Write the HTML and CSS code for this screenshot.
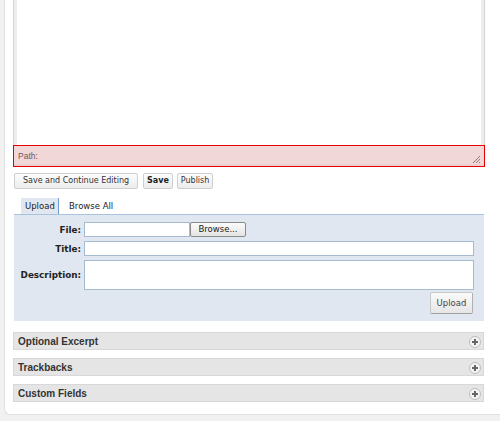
FILE: index.html
```html
<!DOCTYPE html>
<html>
<head>
<meta charset="utf-8">
<link rel="stylesheet" href="styles.css">
</head>
<body>
<div class="wrap">
  <div class="editor"></div>
  <div class="pathbar">
    <span class="path-label">Path:</span>
    <svg class="grip" width="10" height="10" viewBox="0 0 10 10"><path d="M9 2 L2 9 M9 5 L5 9 M9 8 L8 9" stroke="#8a7a7c" stroke-width="1" fill="none"/></svg>
  </div>
  <div class="actions">
    <button class="btn btn-wide">Save and Continue Editing</button>
    <button class="btn btn-bold">Save</button>
    <button class="btn">Publish</button>
  </div>
  <div class="tabs">
    <div class="tab tab-active">Upload</div>
    <div class="tab">Browse All</div>
  </div>
  <div class="panel">
    <div class="form">
      <label class="lbl">File:</label>
      <div class="file-row"><span class="input file-input"></span><span class="browse">Browse...</span></div>
      <label class="lbl">Title:</label>
      <span class="input"></span>
      <label class="lbl">Description:</label>
      <span class="input desc"></span>
    </div>
    <div class="upload-row"><button class="upload">Upload</button></div>
  </div>
  <div class="boxes">
    <div class="box"><span>Optional Excerpt</span><span class="plus"></span></div>
    <div class="box"><span>Trackbacks</span><span class="plus"></span></div>
    <div class="box"><span>Custom Fields</span><span class="plus"></span></div>
  </div>
</div>
</body>
</html>
```
FILE: styles.css
```css
html, body {
  margin: 0;
  padding: 0;
  background: #f1f1f1;
  overflow: hidden;
  height: 421px;
}
.wrap {
  margin-top: -10px;
  margin-left: 4px;
  background: #fff;
  border: 1px solid #e0e0e0;
  border-right: none;
  border-radius: 0 0 0 6px;
  padding: 0 0 12px 8px;
}
.editor {
  width: 472px;
  height: 154px;
  box-sizing: border-box;
  border-left: 1px solid #d4d4d4;
  border-right: 1px solid #d4d4d4;
  box-shadow: inset 3px 0 0 #ededed, inset -3px 0 0 #ededed;
  background: #fff;
}
.pathbar {
  width: 472px;
  height: 22px;
  box-sizing: border-box;
  border: 1px solid #e60000;
  background: #f2d7d9;
  box-shadow: inset 0 -2px 0 #ebcfd2;
  display: flex;
  align-items: center;
  justify-content: space-between;
  padding: 0 3px 0 4px;
}
.path-label {
  font-family: "Liberation Sans", Arial, sans-serif;
  font-size: 8.5px;
  color: #6a5a5c;
  margin-top: -1px;
}
.grip { margin-top: 6px; }
.actions {
  display: flex;
  gap: 4px;
  margin-top: 6px;
  margin-left: 1px;
}
.btn {
  font-family: "DejaVu Sans", Verdana, sans-serif;
  font-size: 8px;
  color: #333;
  height: 16px;
  padding: 0 3px;
  border: 1px solid #cfcfcf;
  border-radius: 2px;
  background: linear-gradient(#fdfdfd, #ececec);
  line-height: 14px;
  margin: 0;
}
.btn-wide { width: 124px; margin-right: 1px; }
.btn-bold { font-weight: bold; color: #222; }
.tabs {
  display: flex;
  margin-top: 9px;
  margin-left: 1px;
  width: 470px;
  border-bottom: 1px solid #a9c3de;
  height: 16px;
}
.tab {
  font-family: "DejaVu Sans", Verdana, sans-serif;
  font-size: 8.5px;
  color: #222;
  line-height: 17px;
  padding: 0 4px;
}
.tab-active {
  margin-left: 7px;
  width: 38px;
  box-sizing: border-box;
  background: #e0e7f0;
  border-right: 1px solid #6e9bd0;
}
.tab + .tab { margin-left: 6px; }
.panel {
  margin-left: 1px;
  width: 470px;
  height: 106px;
  box-sizing: border-box;
  background: #e0e7f0;
  padding: 7px 10px 0 0;
}
.form {
  display: grid;
  grid-template-columns: 67px 1fr;
  grid-template-rows: 15px 15px 30px;
  column-gap: 3px;
  row-gap: 4px;
  align-items: center;
}
.lbl {
  font-family: "DejaVu Sans", Verdana, sans-serif;
  font-weight: bold;
  font-size: 8.8px;
  color: #222;
  text-align: right;
}
.file-row { display: flex; }
.input {
  display: block;
  height: 15px;
  box-sizing: border-box;
  background: #fff;
  border: 1px solid #a6bbd0;
}
.file-input { width: 106px; }
.browse {
  width: 56px;
  height: 15px;
  box-sizing: border-box;
  border: 1px solid #8a8a8a;
  border-radius: 2px;
  background: linear-gradient(#fbfbfb, #e4e4e4);
  font-family: "DejaVu Sans", Verdana, sans-serif;
  font-size: 8.5px;
  color: #222;
  text-align: center;
  line-height: 13px;
}
.desc { height: 30px; }
.upload-row {
  display: flex;
  justify-content: flex-end;
  margin-top: 2px;
  padding-right: 1px;
}
.upload {
  width: 43px;
  height: 22px;
  padding: 0;
  margin: 0;
  font-family: "DejaVu Sans", Verdana, sans-serif;
  font-size: 8.5px;
  color: #444;
  border: 1px solid #c8c8c8;
  border-bottom-color: #a0a0a0;
  border-right-color: #b0b0b0;
  border-radius: 2px;
  background: linear-gradient(#fafafa, #e6e6e6);
}
.boxes {
  display: flex;
  flex-direction: column;
  gap: 8px;
  margin-top: 11px;
}
.box {
  width: 471px;
  height: 18px;
  box-sizing: border-box;
  background: #e5e5e5;
  border: 1px solid #d8d8d8;
  display: flex;
  align-items: center;
  justify-content: space-between;
  padding: 0 2px 0 4px;
  font-family: "Liberation Sans", Arial, sans-serif;
  font-weight: bold;
  font-size: 10px;
  color: #333;
}
.plus {
  position: relative;
  width: 10px;
  height: 10px;
  border-radius: 50%;
  border: 1px solid #bdbdbd;
  background: #f4f4f4;
  margin-top: 2px;
}
.plus::before, .plus::after {
  content: "";
  position: absolute;
  background: #666;
}
.plus::before { left: 2px; top: 4px; width: 6px; height: 2px; }
.plus::after { left: 4px; top: 2px; width: 2px; height: 6px; }
```
